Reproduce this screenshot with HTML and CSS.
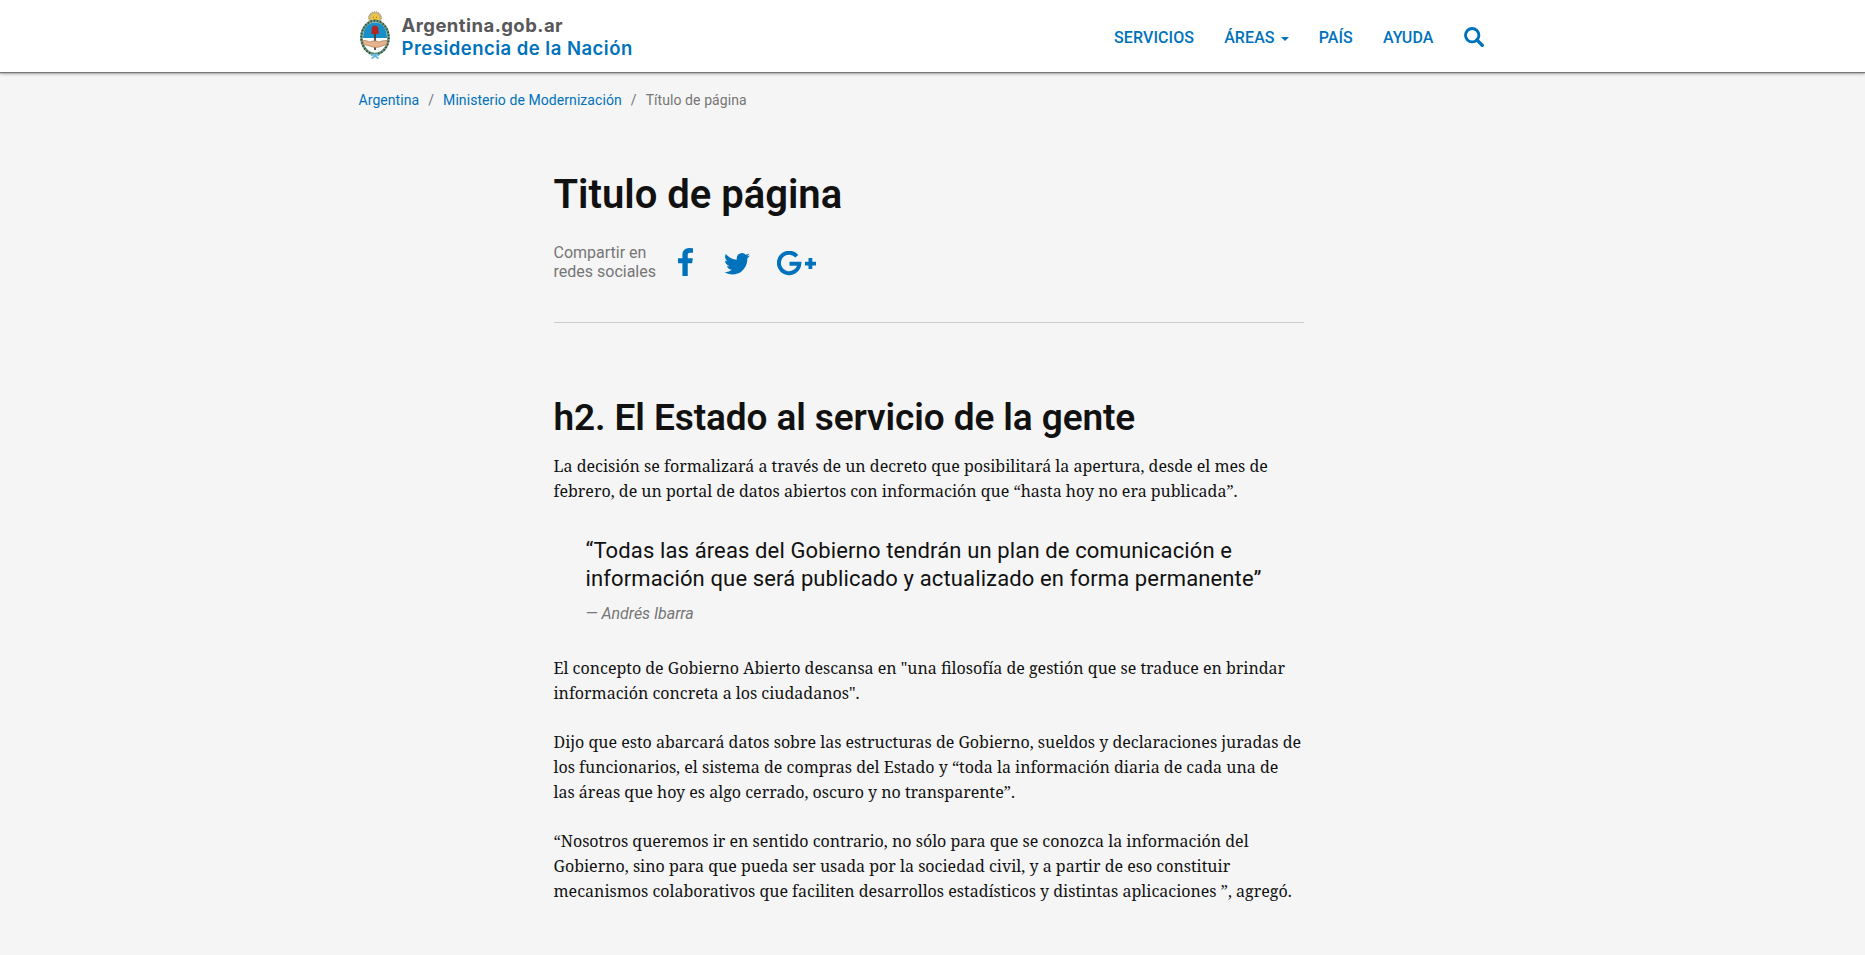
FILE: index.html
```
<!DOCTYPE html>
<html lang="es">
<head>
<meta charset="utf-8">
<title>Título de página</title>
<link rel="stylesheet" href="styles.css">
</head>
<body>
<header class="navbar">
  <div class="container navbar-inner">
    <a class="brand" href="#">
      <svg class="crest" viewBox="0 0 34 50" width="34" height="50" aria-hidden="true">
        <ellipse cx="17" cy="9" rx="6.4" ry="6.2" fill="#c8b883"/>
        <ellipse cx="17" cy="9" rx="6.4" ry="6.2" fill="none" stroke="#94814e" stroke-width="1" stroke-dasharray="1 1"/>
        <circle cx="17" cy="9" r="4.2" fill="#f0c43f"/>
        <path d="M15 8.300h1M18 8.300h1M15.500 11h3" stroke="#8a6425" stroke-width=".8"/>
        <ellipse cx="17" cy="28.500" rx="13.500" ry="16.500" fill="#fff" stroke="#6f9a7e" stroke-width="2.600"/>
        <ellipse cx="17" cy="28.500" rx="13.800" ry="16.800" fill="none" stroke="#34503f" stroke-width="1.900" stroke-dasharray="1.500 1.700"/>
        <path d="M5 29C5 19 10 13.500 17 13.500S29 19 29 29z" fill="#178fc8"/>
        <path d="M17 22v19" stroke="#453a36" stroke-width="1.700"/>
        <path d="M13.100 24.500c.5-1.500.6-2.500.6-4.500.2-2.500 2-3.800 4-3.300 2 .4 2.900 2 2.700 4l.5 3.800c-2.500 1-5.200 1-7.800 0z" fill="#b3261f"/>
        <path d="M4.800 31.500c3 0 5 .5 7.200 1.400 3.500-1.400 6-1.400 9 .2 2.500-1.200 5-1.600 8.200-1.600l-.7 4.400c-3 0-4.500 1.300-7 2-3 .8-6 .6-8.700-.5-2.400-.9-4.500-1.500-7.200-1.500z" fill="#e6b48c" stroke="#9a6f52" stroke-width=".6"/>
        <path d="M13 46.500c2-1.500 6-1.500 8 0M13.500 49.500l3.500-2.500 3.500 2.500" fill="none" stroke="#5fb6dc" stroke-width="1.600"/>
      </svg>
      <span class="brand-text">
        <span class="brand-site">Argentina.gob.ar</span>
        <span class="brand-org">Presidencia de la Nación</span>
      </span>
    </a>
    <nav class="menu">
      <a href="#">SERVICIOS</a>
      <a href="#">ÁREAS<span class="caret"></span></a>
      <a href="#">PAÍS</a>
      <a href="#">AYUDA</a>
      <a href="#" class="search" aria-label="Buscar">
        <svg viewBox="0 0 20 20" width="20" height="20"><circle cx="8.200" cy="8.200" r="6.700" fill="none" stroke="currentColor" stroke-width="2.900"/><path d="M12.900 12.900l5.300 5.300" stroke="currentColor" stroke-width="3.400" stroke-linecap="round"/></svg>
      </a>
    </nav>
  </div>
</header>
<div class="container">
  <ol class="breadcrumb">
    <li><a href="#">Argentina</a></li>
    <li><a href="#">Ministerio de Modernización</a></li>
    <li>Título de página</li>
  </ol>
</div>
<main class="article">
  <h1>Titulo de página</h1>
  <div class="share">
    <p class="share-label">Compartir en<br>redes sociales</p>
    <a href="#" class="share-facebook" aria-label="Facebook"><svg viewBox="479 0 864 1664" width="15" height="28" preserveAspectRatio="none"><path fill="currentColor" d="M1343 12v264h-157q-86 0-116 36t-30 108v189h293l-39 296h-254v759h-306v-759h-255v-296h255v-218q0-186 104-288.500t277-102.500q147 0 228 12z"/></svg></a>
    <a href="#" class="share-twitter" aria-label="Twitter"><svg viewBox="108 256 1576 1280" width="26" height="21.500" preserveAspectRatio="none"><path fill="currentColor" d="M1684 408q-67 98-162 167 1 14 1 42 0 130-38 259.500t-115.500 248.500-184.500 210.500-258 146-323 54.500q-271 0-496-145 35 4 78 4 225 0 401-138-105-2-188-64.500t-114-159.500q33 5 61 5 43 0 85-11-112-23-185.500-111.500t-73.500-205.500v-4q68 38 146 41-66-44-105-115t-39-154q0-88 44-163 121 149 294.500 238.500t371.500 99.500q-8-38-8-74 0-134 94.500-228.500t228.500-94.500q140 0 236 102 109-21 205-78-37 115-142 178 93-10 186-50z"/></svg></a>
    <a href="#" class="share-google" aria-label="Google+"><svg viewBox="0 0 39 25" width="39" height="25"><path fill="none" stroke="currentColor" stroke-width="4" d="M19.800 5.200A10.200 10.200 0 1 0 22.300 12.800H12.500"/><path fill="currentColor" d="M31.500 7h3.800v3.700H39v3.700h-3.700V18h-3.800v-3.600H28v-3.700h3.500z"/></svg></a>
  </div>
  <hr>
  <h2>h2. El Estado al servicio de la gente</h2>
  <p>La decisión se formalizará a través de un decreto que posibilitará la apertura, desde el mes de febrero, de un portal de datos abiertos con información que “hasta hoy no era publicada”.</p>
  <blockquote>
    <p>“Todas las áreas del Gobierno tendrán un plan de comunicación e información que será publicado y actualizado en forma permanente”</p>
    <footer>— Andrés Ibarra</footer>
  </blockquote>
  <p>El concepto de Gobierno Abierto descansa en "una filosofía de gestión que se traduce en brindar información concreta a los ciudadanos".</p>
  <p>Dijo que esto abarcará datos sobre las estructuras de Gobierno, sueldos y declaraciones juradas de los funcionarios, el sistema de compras del Estado y “toda la información diaria de cada una de las áreas que hoy es algo cerrado, oscuro y no transparente”.</p>
  <p>“Nosotros queremos ir en sentido contrario, no sólo para que se conozca la información del Gobierno, sino para que pueda ser usada por la sociedad civil, y a partir de eso constituir mecanismos colaborativos que faciliten desarrollos estadísticos y distintas aplicaciones ”, agregó.</p>
</main>
</body>
</html>
```
FILE: styles.css
```
* { box-sizing: border-box; }
html { overflow: hidden; }
body {
  margin: 0;
  background: #f5f5f5;
  color: #111;
  font-family: Roboto, "Liberation Sans", sans-serif;
  font-size: 16px;
}
a { color: #0072bb; text-decoration: none; }
svg { display: block; }
.container { width: 1140px; margin-left: 357.500px; }
.navbar {
  height: 72px;
  background: #fff;
  box-shadow: 0 1px 1px #777, 0 2px 3px rgba(0, 0, 0, .3);
}
.navbar-inner { display: flex; justify-content: space-between; }
.brand { display: flex; gap: 10px; padding-top: 9px; }
.brand-text {
  display: flex;
  flex-direction: column;
  padding-top: 5px;
  font-family: Inter, "Liberation Sans", sans-serif;
  font-size: 18.500px;
  line-height: 22.500px;
  white-space: nowrap;
}
.brand-site { color: #58585a; font-weight: 700; letter-spacing: .44px; }
.brand-org { color: #0072bb; font-weight: 600; letter-spacing: .48px; }
.menu {
  display: flex;
  gap: 30px;
  padding: 28px 14px 0 0;
  line-height: 19px;
  font-weight: 500;
}
.menu a { display: flex; letter-spacing: .1px; }
.caret {
  width: 8px;
  height: 4px;
  margin: 9px 0 0 6px;
  border: 4px solid transparent;
  border-top-color: #0072bb;
  border-bottom: 0;
}
.search { margin-top: -1px; }
.breadcrumb {
  display: flex;
  margin: 0;
  padding: 18px 0 0 1px;
  list-style: none;
  color: #767676;
  font-size: 14px;
  line-height: 20px;
  letter-spacing: .07px;
}
.breadcrumb li + li::before { content: "/"; padding: 0 9px; }
.article {
  width: 750px;
  margin: 63px 0 0 553.500px;
  font-family: "Noto Serif", "Liberation Serif", serif;
  line-height: 25px;
}
h1, h2 { font-family: Roboto, "Liberation Sans", sans-serif; font-weight: 600; }
h1 { margin: 0; font-size: 40px; line-height: 44px; }
h2 { margin: 75px 0 16px; font-size: 37px; line-height: 40px; letter-spacing: -.1px; }
.article p { margin: 0 0 24px; }
.share { display: flex; align-items: flex-start; margin-top: 26px; }
.article .share-label {
  width: 124.500px;
  margin: 0;
  font-family: Roboto, "Liberation Sans", sans-serif;
  line-height: 19px;
  color: #767676;
}
.share-facebook { margin-top: 5px; }
.share-twitter { margin: 10px 0 0 31px; }
.share-google { margin: 8px 0 0 27px; }
hr { margin: 41px 0 0; border: 0; border-top: 1px solid #ccc; }
blockquote {
  margin: 33px 0 31px;
  padding: 0 32px;
  font-family: Roboto, "Liberation Sans", sans-serif;
}
.article blockquote p { margin: 0; font-size: 22px; line-height: 28px; letter-spacing: .13px; }
blockquote footer { margin-top: 9px; font-style: italic; line-height: 23px; letter-spacing: -.05px; color: #767676; }
```
